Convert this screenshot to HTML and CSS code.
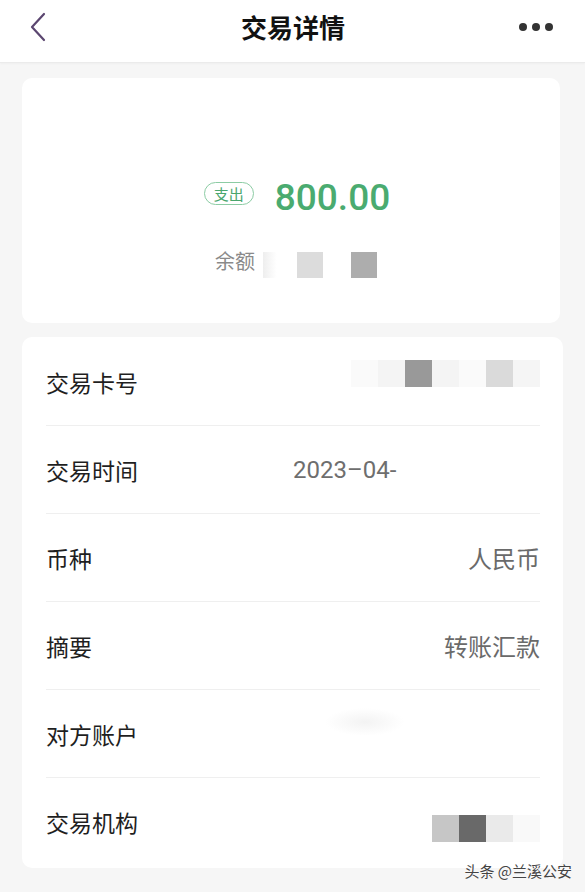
FILE: index.html
```html
<!DOCTYPE html>
<html lang="zh-CN">
<head>
    <meta charset="UTF-8">
    <meta name="viewport" content="width=device-width, initial-scale=1.0">
    <title>交易详情</title>
    <link rel="stylesheet" href="styles.css">
</head>
<body>

    <div class="header">
        <a class="back">
            <svg width="18" height="30" viewBox="0 0 18 30">
                <path d="M15 2 L3 15 L15 28" fill="none" stroke="#5b4670" stroke-width="2.2" stroke-linecap="round" stroke-linejoin="round"/>
            </svg>
        </a>
        <h1>交易详情</h1>
        <div class="more"><span></span><span></span><span></span></div>
    </div>

    <div class="card summary">
        <div class="amount-row">
            <span class="tag">支出</span>
            <span class="amount">800.00</span>
        </div>
        <div class="balance-row">
            <span class="balance-label">余额</span>
            <span class="mosaic m-fade"></span>
            <span class="mosaic m-light"></span>
            <span class="gap"></span>
            <span class="mosaic m-mid"></span>
        </div>
    </div>

    <div class="card details">
        <div class="row">
            <span class="label">交易卡号</span>
            <span class="value blocks">
                <i class="b1"></i><i class="b2"></i><i class="b3"></i><i class="b4"></i><i class="b5"></i><i class="b6"></i><i class="b7"></i>
            </span>
        </div>
        <div class="row">
            <span class="label">交易时间</span>
            <span class="value date">2023–04-</span>
        </div>
        <div class="row">
            <span class="label">币种</span>
            <span class="value">人民币</span>
        </div>
        <div class="row">
            <span class="label">摘要</span>
            <span class="value">转账汇款</span>
        </div>
        <div class="row">
            <span class="label">对方账户</span>
            <span class="value smudge"></span>
        </div>
        <div class="row">
            <span class="label">交易机构</span>
            <span class="value blocks low">
                <i class="c1"></i><i class="c2"></i><i class="c3"></i><i class="c4"></i>
            </span>
        </div>
    </div>

    <!-- watermark sits over the page corner -->
    <div class="watermark">头条 @兰溪公安</div>

</body>
</html>
```

FILE: styles.css
```css
body {
    font-family: "Noto Sans CJK SC", "Noto Sans", sans-serif;
    background: #f6f6f6;
    margin: 0;
    color: #1f1f1f;
    position: relative;
    height: 892px;
    overflow: hidden;
}
.header {
    height: 62px;
    background: white;
    border-bottom: 1px solid #ebebeb;
    box-shadow: 0 1px 2px rgba(0, 0, 0, 0.03);
    display: flex;
    align-items: center;
    justify-content: space-between;
    padding: 0 32px 0 29px;
}
.back {
    display: flex;
    width: 40px;
    margin-top: -8px;
}
.header h1 {
    margin: -10px 0 0 4px;
    font-size: 26px;
    font-weight: bold;
    color: #111;
}
.more {
    display: flex;
    gap: 5px;
    width: 40px;
    justify-content: flex-end;
    margin-top: -8px;
}
.more span {
    width: 8px;
    height: 8px;
    border-radius: 50%;
    background: #333;
}
.card {
    background: white;
    border-radius: 10px;
    margin: 15px 22px 0;
}
.summary {
    margin-right: 25px;
    padding: 97px 0 45px;
    display: flex;
    flex-direction: column;
    align-items: center;
}
.amount-row {
    display: flex;
    align-items: center;
    gap: 21px;
    height: 44px;
    margin-left: 12px;
}
.tag {
    border: 1.5px solid #8ccca4;
    color: #4aa66e;
    font-size: 15px;
    line-height: 21px;
    padding: 0 9px;
    border-radius: 14px;
    margin-top: -8px;
}
.amount {
    font-family: Roboto, "Noto Sans", sans-serif;
    font-size: 37px;
    font-weight: 500;
    color: #4aab70;
}
.balance-row {
    display: flex;
    align-items: center;
    margin-top: 33px;
    height: 26px;
    margin-left: 10px;
}
.balance-label {
    font-size: 20px;
    color: #8a8a8a;
    margin-right: 8px;
    margin-top: -10px;
}
.mosaic {
    width: 26px;
    height: 26px;
}
.m-fade {
    width: 34px;
    background: linear-gradient(90deg, #eee, #fff 40%, #fff);
}
.m-light { background: #dcdcdc; }
.m-mid { background: #adadad; }
.gap { width: 28px; }
.details {
    margin-top: 14px;
    padding: 1px 23px 3px 24px;
}
.row {
    height: 87px;
    display: flex;
    align-items: center;
    justify-content: space-between;
    border-bottom: 1px solid #efefef;
    font-size: 23px;
}
.row:last-child {
    border-bottom: none;
}
.label {
    color: #1f1f1f;
}
.value {
    color: #6a6a6a;
    font-size: 24px;
}
.date {
    width: 247px;
    font-family: Roboto, "Liberation Sans", sans-serif;
    font-size: 24px;
    color: #6e6e6e;
}
.blocks {
    display: flex;
    height: 27px;
    margin-top: -16px;
}
.blocks.low {
    margin-top: 14px;
}
.blocks i {
    width: 27px;
    height: 27px;
}
.b1 { width: 23px; background: #fafafa; }
.b2 { background: #f4f4f4; }
.b3 { background: #999; }
.b4 { background: #f4f4f4; }
.b5 { background: #fafafa; }
.b6 { background: #dadada; }
.b7 { background: #f5f5f5; }
.c1 { width: 25px; background: #c6c6c6; }
.c2 { background: #696969; }
.c3 { background: #eaeaea; }
.c4 { background: #f9f9f9; }
.smudge {
    width: 80px;
    height: 28px;
    margin: -24px 135px 0 0;
    background: radial-gradient(ellipse at center, #f3f3f3, #fff 70%);
}
.watermark {
    position: absolute;
    right: 13px;
    top: 861px;
    font-size: 15px;
    line-height: 20px;
    color: #444;
    text-shadow: 0 0 2px #fff, 0 0 1px #fff;
}
```
